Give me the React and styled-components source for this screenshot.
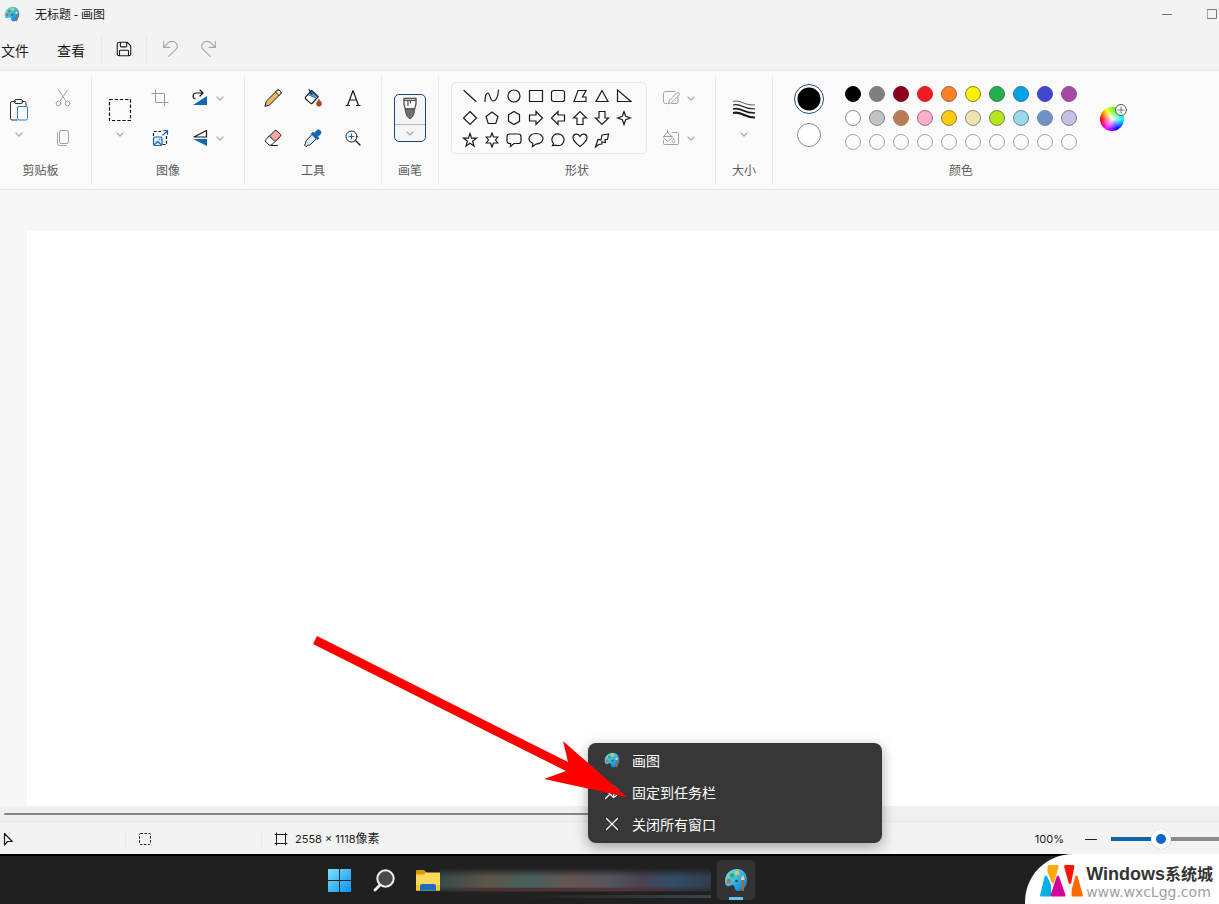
import * as React from "react";
import styled, { createGlobalStyle } from "styled-components";

const GlobalStyle = createGlobalStyle`
  * {
    box-sizing: border-box;
  }
  body {
    margin: 0;
    font-family: "Inter", "Noto Sans CJK SC", sans-serif;
    font-size: 12px;
    color: #1b1b1b;
    background: #f3f3f3;
  }
  button {
    display: flex;
    align-items: center;
    justify-content: center;
    padding: 0;
    border: 0;
    background: none;
    color: inherit;
    font: inherit;
  }
  svg {
    display: block;
    flex-shrink: 0;
  }
`;

/* ---------- icons ---------- */

const Icon = ({ size = 20, box = 20, children, ...rest }) => (
  <svg
    width={size}
    height={size}
    viewBox={`0 0 ${box} ${box}`}
    fill="none"
    stroke="currentColor"
    strokeLinecap="round"
    strokeLinejoin="round"
    aria-hidden="true"
    {...rest}
  >
    {children}
  </svg>
);

const PaintIcon = ({ size = 24 }) => {
  const id = React.useId();
  return (
    <Icon size={size} box={24} stroke="none">
      <defs>
        <linearGradient id={id} x1="0" y1="0" x2="1" y2="1">
          <stop offset="0" stopColor="#7fe3f2" />
          <stop offset="0.5" stopColor="#37b4e3" />
          <stop offset="1" stopColor="#0a73c4" />
        </linearGradient>
      </defs>
      <path
        fill={`url(#${id})`}
        d="M13 1C6 1 1 6.5 1 13c0 3.600 1.500 5.200 3.400 5.200 2.400 0 3.200-1.700 4.900-1 2 .8.7 5.800 4.700 5.800 5.500 0 9-5 9-11C23 5.500 18.800 1 13 1z"
      />
      <circle cx="4.800" cy="13" r="2.200" fill="#c9694a" />
      <circle cx="8" cy="7.500" r="2.300" fill="#35b04a" />
      <circle cx="13" cy="5" r="2.200" fill="#e8c445" />
      <circle cx="12.500" cy="13" r="1.300" fill="#1d4e7c" />
      <path fill="#e8cfa0" d="M18.800 7.500c1.500 1.300 2 3 1.600 4.500h-3.200c-.4-1.500.1-3.200 1.600-4.500z" />
      <path fill="#b0682c" d="M17.700 12h2.400l-.3 11h-1.900z" />
    </Icon>
  );
};

const Chevron = () => (
  <Icon size={10} box={10} stroke="#adadad">
    <path strokeWidth="1.200" d="M2 4l3 3 3-3" />
  </Icon>
);

const SaveIcon = () => (
  <Icon size={18}>
    <path strokeWidth="1.200" d="M4.500 2.500h9l4 4v9a2 2 0 0 1-2 2h-11a2 2 0 0 1-2-2v-11a2 2 0 0 1 2-2zM6 2.500v4.200c0 .6.300.9.900.9h5.200c.6 0 .9-.3.9-.9V2.500M5 17.500v-5.300c0-.6.300-.9.900-.9h8.200c.6 0 .9.300.9.900v5.300" />
  </Icon>
);

const UndoIcon = ({ flip }) => (
  <Icon size={18} stroke="#a6a6a6">
    <path
      transform={flip ? "matrix(-1 0 0 1 20 0)" : undefined}
      strokeWidth="1.200"
      d="M3 1.500v6.700h6.700M3.300 8l4-4.200c3-3 7.300-2.900 9.400-.4 2 2.400 1.600 5.300-.4 7.300l-7.800 7.600"
    />
  </Icon>
);

const PasteIcon = () => (
  <Icon size={24} box={24} stroke="#333">
    <path d="M8.500 3.500H5a1.500 1.500 0 0 0-1.500 1.500v15.500A1.500 1.500 0 0 0 5 22h5M15 3.500h2.500A1.500 1.500 0 0 1 19 5v3" />
    <rect x="7.500" y="1.500" width="8" height="4" rx="1.500" />
    <rect x="10.500" y="8.500" width="10" height="13.500" rx="1.500" stroke="#2f7cc4" fill="#f8fbff" />
  </Icon>
);

const CutIcon = () => (
  <Icon stroke="#a3a3a3">
    <circle cx="5.500" cy="15.500" r="2.300" />
    <circle cx="14.500" cy="15.500" r="2.300" />
    <path d="M5.500 2l7.800 11.600M14.500 2L6.700 13.600" />
  </Icon>
);

const CopyIcon = () => (
  <Icon stroke="#a3a3a3">
    <rect x="6.500" y="2.500" width="9" height="13" rx="1.500" />
    <path d="M4.500 4.500v11a2 2 0 0 0 2 2h7" />
  </Icon>
);

const SelectIcon = () => (
  <Icon size={24} box={24} strokeLinecap="butt">
    <rect x="1.500" y="1.500" width="21" height="21" strokeWidth="1.200" strokeDasharray="3.400 1.800" stroke="#111" />
  </Icon>
);

const CropIcon = () => (
  <Icon stroke="#9a9a9a">
    <path d="M5.500 2v12.500H18M2 5.500h12.500V18" />
  </Icon>
);

const ResizeIcon = () => (
  <Icon>
    <path strokeWidth="1.200" strokeLinecap="butt" strokeDasharray="3 1.700" d="M3.500 8V3.500H11M16.500 8v8.500H12" />
    <path stroke="#1668b5" strokeWidth="1.200" d="M13 7l4-4M13.500 2.500h4v4" />
    <rect x="3.500" y="9" width="8.500" height="8.500" rx="1.500" strokeWidth="1.200" stroke="#1668b5" fill="#dcecfa" />
    <path stroke="#1668b5" strokeWidth="1.200" d="M4.500 16.500l3.200-3 3.200 3M9.700 11.300v.4" />
  </Icon>
);

const RotateIcon = () => (
  <Icon>
    <path strokeWidth="1.200" d="M10 2l3 3-3 3M12.700 5H6a3 3 0 0 0-1 5.800" />
    <path d="M17 8v9H3z" fill="#1367b3" stroke="none" />
  </Icon>
);

const FlipIcon = () => (
  <Icon>
    <path strokeWidth="1.200" d="M16.500 2.500v6.500H4z" />
    <path d="M17 11v7L3 11z" fill="#1367b3" stroke="none" />
  </Icon>
);

const PencilIcon = () => (
  <Icon>
    <path fill="#e9b95f" d="M2 18l1.300-4.800L14 2.500a1.800 1.800 0 0 1 2.600 0l.9.900a1.800 1.800 0 0 1 0 2.600L6.800 16.700z" />
    <path fill="#f5e2b8" d="M12.500 4L16 7.500l1.500-1.500c.7-.7.7-1.800 0-2.500l-1-1c-.7-.7-1.800-.7-2.500 0z" />
  </Icon>
);

const FillIcon = () => (
  <Icon>
    <path fill="#fff" strokeWidth="1.200" d="M8.500 2.500l6.800 6.200-5.800 6.300a1.500 1.500 0 0 1-2.100.1l-4.600-4.100a1.500 1.500 0 0 1-.1-2.100z" />
    <path fill="#5ea3dd" stroke="#1668b5" d="M5.500 6.500l2.800-3 5.500 5-1 1z" />
    <path strokeWidth="1.200" d="M6 1.500l3 5" />
    <path fill="#b5441c" stroke="#7d2e12" strokeWidth=".5" d="M16 11.500c1.300 1.700 2.500 3 2.500 4.300a2.500 2.500 0 0 1-5 0c0-1.300 1.200-2.600 2.500-4.300z" />
  </Icon>
);

const TextIcon = () => (
  <Icon>
    <path strokeWidth="1.200" d="M4.500 17.500L10 2.500l5.500 15M6.500 12h7M3 17.500h3.500M13.500 17.500H17" />
  </Icon>
);

const EraserIcon = () => (
  <Icon>
    <path fill="#f6a6a0" d="M6.500 8l5.300-5.200a1.500 1.500 0 0 1 2.100 0l3.500 3.500a1.500 1.500 0 0 1 0 2.100L12 13.500z" />
    <path fill="#fff" d="M6.500 8l5.500 5.500-3.500 3.600H6l-3.200-3.200a1.500 1.500 0 0 1 0-2.100z" />
    <path d="M8 17.500h6.500" />
  </Icon>
);

const DropperIcon = () => (
  <Icon>
    <path fill="#dcecf8" d="M9.500 6.500l4 4-6 6c-1 1-2 .5-3 .9L3 18.500 1.500 17l1-1.500c.4-1-.1-2 .9-3z" />
    <path fill="#1367b3" stroke="#1367b3" d="M8.500 5.500l1.300-1.200 1.500 1 2.400-2.600a2.400 2.400 0 0 1 3.500 3.500l-2.500 2.500 1 1.500-1.200 1.300z" />
  </Icon>
);

const ZoomIcon = () => (
  <Icon>
    <circle cx="8.500" cy="8.500" r="5.500" />
    <path d="M12.700 12.700L17 17" strokeWidth="1.300" />
    <path d="M8.500 6v5M6 8.500h5" stroke="#1367b3" />
  </Icon>
);

const BrushIcon = () => (
  <Icon size={24} box={24} stroke="#4d4d4d">
    <path fill="#f8f8f8" strokeWidth="1.300" d="M6 2.500h12v5c0 2-1 3.500-1.300 5.500H7.300C7 11 6 9.500 6 7.500z" />
    <path strokeWidth="1.200" d="M10 4.500v5M12.500 4.500v2.500M6 4.500h12" />
    <path d="M7.500 13h9l-.5 4.500c-.4 2.300-2.500 5-4 5s-3.600-2.700-4-5z" fill="#707070" />
  </Icon>
);

const OutlineIcon = () => (
  <Icon stroke="#a3a3a3">
    <path d="M14 3.500H4.500a2 2 0 0 0-2 2v8a2 2 0 0 0 2 2H6M17 9.500v4a2 2 0 0 1-2 2h-4" />
    <path d="M7.500 15.500l1-3.300 7.200-7.200a1.500 1.500 0 0 1 2.300 2.200l-7.200 7.300z" />
  </Icon>
);

const ShapeFillIcon = () => (
  <Icon stroke="#a3a3a3">
    <path d="M11 4.500h5.500a1 1 0 0 1 1 1v10a1 1 0 0 1-1 1h-13a1 1 0 0 1-1-1V12" />
    <path d="M6.500 4.500l5 4.500-4 4a1 1 0 0 1-1.400 0L2.700 9.700a1 1 0 0 1 0-1.400zM3 8.500h8M6.500 2v3M12.500 11c1 1.200 1.300 1.700 1.300 2.300a1.300 1.300 0 0 1-2.600 0c0-.6.400-1.100 1.300-2.300z" />
  </Icon>
);

const SizeIcon = () => (
  <Icon size={24} box={24} stroke="#1b1b1b" strokeLinecap="butt">
    <path strokeWidth=".7" d="M1 3.500c3-1 6-.5 10 1.300S19 7 23 7" />
    <path strokeWidth="1.200" d="M1 7c3-1 6-.5 10 1.500S19 11 23 11" />
    <path strokeWidth="1.700" d="M1 11c3-1 6-.5 10 1.500S19 15 23 15" />
    <path strokeWidth="2.200" d="M1 15c3-1 6-.5 10 1.500S19 19.500 23 19.500" />
  </Icon>
);

const PlusBadge = () => (
  <Icon size={12} box={12} stroke="#555">
    <circle cx="6" cy="6" r="5.500" fill="#fbfbfb" />
    <path d="M6 3v6M3 6h6" stroke="#777" />
  </Icon>
);

const PointerIcon = () => (
  <Icon size={16} box={16}>
    <path strokeWidth="1.200" d="M3.500 2.500v11.500l3-3.500h4.800z" />
  </Icon>
);

const SelectionIcon = () => (
  <Icon size={14} box={14} strokeLinecap="butt">
    <rect x="1.500" y="1.500" width="11" height="11" rx="1" strokeDasharray="2.500 1.500" />
  </Icon>
);

const CanvasSizeIcon = () => (
  <Icon size={14} box={14}>
    <path d="M2.500 1v12M11.500 1v12M1 2.500h12M1 11.500h12" />
  </Icon>
);

const StartIcon = () => (
  <Icon size={24} box={24} stroke="none">
    <defs>
      <linearGradient id="start" x1="0" y1="0" x2="24" y2="24" gradientUnits="userSpaceOnUse">
        <stop offset="0" stopColor="#7be6fb" />
        <stop offset="1" stopColor="#0a8df0" />
      </linearGradient>
    </defs>
    <path fill="url(#start)" d="M0 1h11v11H0zM12 1h11v11H12zM0 13h11v11H0zM12 13h11v11H12z" />
  </Icon>
);

const SearchIcon = () => (
  <Icon size={24} box={24} stroke="#f0f0f0">
    <path strokeWidth="2.800" d="M8.500 16.500L3 22" />
    <circle cx="13.500" cy="10.500" r="8.200" strokeWidth="2" fill="#4a4a4a" />
  </Icon>
);

const FolderIcon = () => (
  <Icon size={24} box={24} stroke="none">
    <path fill="#d99a12" d="M0 3a1 1 0 0 1 1-1h7l2.500 2.500V7H0z" />
    <path fill="#ffd75e" d="M0 6.500h8l2-2h14v18H0z" />
    <path fill="#fbc52c" d="M0 17h24v5.500H0z" />
    <path fill="#1670c6" d="M4 22.500V18a2 2 0 0 1 2-2h12a2 2 0 0 1 2 2v4.500z" />
  </Icon>
);

const PinIcon = () => (
  <Icon size={16} box={16}>
    <path strokeWidth="1.200" d="M9.500 2l5 4.500-4 2.500-1.500 4-5.500-5.500 3.500-1.500zM6 10l-4.500 4.500M9.500 13.500l3-2" />
  </Icon>
);

const CloseIcon = () => (
  <Icon size={16} box={16}>
    <path strokeWidth="1.200" d="M2.500 2.500l11 11M13.500 2.500l-11 11" />
  </Icon>
);

const SiteLogo = () => (
  <svg width="44" height="32" viewBox="0 0 44 32" aria-hidden="true">
    <path fill="#00b2e3" d="M4.600 11.500c.3-1.300 1.900-1.500 2.500-.3L11 20v10c0 1-.6 1.500-1.500 1.500h-8C.4 31.500-.1 30.800.2 29.700z" />
    <path fill="#ffa800" d="M7.600 1.700C7.800.6 8.300 0 9.400 0h7.800c1.100 0 1.700.7 1.300 1.900L14 17.500c-.4 1.300-1.700 1.300-2.200 0L7.500 7z" />
    <path fill="#d6009a" d="M16.700 11.500c.4-1.300 2-1.300 2.400 0l6.300 18.200c.4 1.100-.1 1.800-1.200 1.800H12c-1.100 0-1.700-.7-1.300-1.800z" />
    <path fill="#ff1200" d="M24.200 1.900C23.900.7 24.500 0 25.600 0h7.200c1.100 0 1.700.7 1.500 1.900L31.200 18c-.4 1.400-2 1.400-2.500 0z" />
    <path fill="#ff6a00" d="M35.300 11.500c.4-1.300 2-1.300 2.400 0l5 18.200c.3 1.100-.2 1.800-1.300 1.800h-8.300c-.9 0-1.500-.5-1.600-1.500l.3-6z" />
  </svg>
);

/* ---------- data ---------- */

const shapes = [
  ["直线", "M2 2.500l12 11"],
  ["曲线", "M1 13.500C1 8 2 5 4 5s2 8 5 8 5-5 5.500-11"],
  ["椭圆", "M14 8A6 6 0 1 1 2 8a6 6 0 0 1 12 0z"],
  ["矩形", "M1.500 2.500h13v11h-13z"],
  ["圆角矩形", "M3.500 2.500h9a2 2 0 0 1 2 2v7a2 2 0 0 1-2 2h-9a2 2 0 0 1-2-2v-7a2 2 0 0 1 2-2z"],
  ["多边形", "M6 2.500h8l-3.500 6.500h3.500v4.500H2z"],
  ["三角形", "M8 2.500l6 11H2z"],
  ["直角三角形", "M1.500 2v11.500H15z"],
  ["菱形", "M8 1.500L14.500 8 8 14.500 1.500 8z"],
  ["五边形", "M8 2l6 4.500-2.200 7H4.200L2 6.500z"],
  ["六边形", "M8 1.500l5.500 3.200v6.600L8 14.500l-5.500-3.200V4.700z"],
  ["右箭头", "M1.500 5H8V1.500L14.500 8 8 14.500V11H1.500z"],
  ["左箭头", "M14.500 5H8V1.500L1.500 8 8 14.500V11h6.500z"],
  ["上箭头", "M5 14.500V8H1.500L8 1.500 14.500 8H11v6.500z"],
  ["下箭头", "M5 1.500V8H1.500L8 14.500 14.500 8H11V1.500z"],
  ["四角星形", "M8 1.500l1.700 4.800L14.500 8l-4.800 1.700L8 14.500 6.300 9.700 1.500 8l4.800-1.700z"],
  ["五角星形", "M8 1.500l1.600 4.700h4.900l-3.900 3 1.400 4.800L8 11.200 4 14l1.400-4.800-3.900-3h4.900z"],
  ["六角星形", "M8 1l1.500 4h4.300L11.500 8l2.300 3H9.500L8 15l-1.500-4H2.200l2.300-3-2.300-3h4.300z"],
  ["圆角矩形标注", "M3.500 2h9A2.500 2.500 0 0 1 15 4.500v4.500a2.500 2.500 0 0 1-2.500 2.500H8L4.500 14.500v-3h-1A2.500 2.500 0 0 1 1 9V4.500A2.500 2.500 0 0 1 3.500 2z"],
  ["椭圆形标注", "M8 1.500c3.900 0 7 2.300 7 5.300s-3.100 5.300-7 5.300L4.500 14.500l.2-3.300C2.400 10.200 1 8.700 1 6.800c0-3 3.100-5.300 7-5.300z"],
  ["云形标注", "M3.500 11.500C1.500 9.500 1.300 6 3.200 4 5 1.500 8.500 1.200 11 2.700c2.800 1.500 3.800 4.800 2.500 7.500-1.300 2.800-4.500 4-7.500 3L2.500 13.500z"],
  ["心形", "M8 14.500C4 11.500 1 8.800 1 5.500 1 2 6 .5 8 4.500 10 .5 15 2 15 5.500c0 3.300-3 6-7 9z"],
  ["闪电形", "M8 3l6.500-1-1 5.500-2.500 0 .5 3-3.500-.5 0 2-3.500.5-3 2.500 1.500-4.500 1-3 3 .5z"],
];

const palette = [
  { color: "#000000", edge: "#000000" },
  { color: "#7f7f7f", edge: "#7f7f7f" },
  { color: "#88001b", edge: "#88001b" },
  { color: "#ec1c24", edge: "#ec1c24" },
  { color: "#ff7f27", edge: "#9b6a48" },
  { color: "#fff200", edge: "#85803a" },
  { color: "#22b14c", edge: "#3b7d4e" },
  { color: "#00a2e8", edge: "#33769a" },
  { color: "#3f48cc", edge: "#3f48cc" },
  { color: "#a349a4", edge: "#a349a4" },
  { color: "#ffffff", edge: "#8a8a8a" },
  { color: "#c3c3c3", edge: "#858585" },
  { color: "#b97a57", edge: "#b97a57" },
  { color: "#ffaec9", edge: "#98727f" },
  { color: "#ffc90e", edge: "#93813d" },
  { color: "#efe4b0", edge: "#8f8b76" },
  { color: "#b5e61d", edge: "#75883e" },
  { color: "#99d9ea", edge: "#6b868d" },
  { color: "#7092be", edge: "#7092be" },
  { color: "#c8bfe7", edge: "#827d93" },
  ...Array.from({ length: 10 }, () => ({ color: "#fbfbfb", edge: "#a8a8a8" })),
];

/* ---------- app ---------- */

const App = () => {
  const [zoom, setZoom] = React.useState(45);

  return (
    <Page>
      <GlobalStyle />
      <TitleBar>
        <PaintIcon size={16} />
        <Title>无标题 - 画图</Title>
        <WindowButtons>
          <WindowButton aria-label="最小化">
            <Icon size={10} box={10} stroke="#777" strokeLinecap="butt">
              <path d="M0 5.500h10" />
            </Icon>
          </WindowButton>
          <WindowButton aria-label="最大化">
            <Icon size={10} box={10} stroke="#777">
              <rect x=".5" y=".5" width="9" height="9" />
            </Icon>
          </WindowButton>
        </WindowButtons>
      </TitleBar>

      <MenuBar>
        <MenuText>文件</MenuText>
        <MenuText>查看</MenuText>
        <QuickButtons>
          <QuickButton $wide aria-label="保存">
            <SaveIcon />
          </QuickButton>
        </QuickButtons>
        <QuickButton aria-label="撤消">
          <UndoIcon />
        </QuickButton>
        <QuickButton aria-label="重做">
          <UndoIcon flip />
        </QuickButton>
      </MenuBar>

      <Ribbon>
        <Group $width={92}>
          <Tools>
            <BigButton $width={38} aria-label="粘贴">
              <PasteIcon />
              <Chevron />
            </BigButton>
            <ToolGrid $columns={1} $cell={50}>
              <ToolButton aria-label="剪切"><CutIcon /></ToolButton>
              <ToolButton aria-label="复制"><CopyIcon /></ToolButton>
            </ToolGrid>
          </Tools>
          <GroupLabel $inset={10}>剪贴板</GroupLabel>
        </Group>

        <Group $width={153}>
          <Tools $indent={8}>
            <BigButton $width={40} aria-label="选择">
              <SelectIcon />
              <Chevron />
            </BigButton>
            <ToolGrid $columns={1} $cell={40}>
              <ToolButton aria-label="裁剪"><CropIcon /></ToolButton>
              <ToolButton aria-label="重设大小"><ResizeIcon /></ToolButton>
            </ToolGrid>
            <ToolGrid $columns={1} $cell={56}>
              <SplitButton aria-label="旋转"><RotateIcon /><Chevron /></SplitButton>
              <SplitButton aria-label="翻转"><FlipIcon /><Chevron /></SplitButton>
            </ToolGrid>
          </Tools>
          <GroupLabel>图像</GroupLabel>
        </Group>

        <Group $width={137}>
          <Tools $indent={8}>
            <ToolGrid $columns={3} $cell={40}>
              <ToolButton aria-label="铅笔"><PencilIcon /></ToolButton>
              <ToolButton aria-label="填充"><FillIcon /></ToolButton>
              <ToolButton aria-label="文本"><TextIcon /></ToolButton>
              <ToolButton aria-label="橡皮擦"><EraserIcon /></ToolButton>
              <ToolButton aria-label="颜色选取器"><DropperIcon /></ToolButton>
              <ToolButton aria-label="放大镜"><ZoomIcon /></ToolButton>
            </ToolGrid>
          </Tools>
          <GroupLabel>工具</GroupLabel>
        </Group>

        <Group $width={57}>
          <Tools $center>
            <BrushButton aria-label="画笔">
              <BrushIcon />
              <BrushMenu>
                <Chevron />
              </BrushMenu>
            </BrushButton>
          </Tools>
          <GroupLabel>画笔</GroupLabel>
        </Group>

        <Group $width={277}>
          <Tools $indent={12}>
            <ShapeGallery>
              {shapes.map(([name, d]) => (
                <button key={name} aria-label={name}>
                  <Icon size={16} box={16}>
                    <path d={d} strokeWidth="1.200" strokeLinejoin="miter" />
                  </Icon>
                </button>
              ))}
            </ShapeGallery>
            <ToolGrid $columns={1} $cell={60}>
              <SplitButton aria-label="形状轮廓"><OutlineIcon /><Chevron /></SplitButton>
              <SplitButton aria-label="形状填充"><ShapeFillIcon /><Chevron /></SplitButton>
            </ToolGrid>
          </Tools>
          <GroupLabel>形状</GroupLabel>
        </Group>

        <Group $width={57}>
          <Tools $center>
            <BigButton $width={40} aria-label="大小">
              <SizeIcon />
              <Chevron />
            </BigButton>
          </Tools>
          <GroupLabel>大小</GroupLabel>
        </Group>

        <Group $width={376} $last>
          <Tools $indent={20}>
            <CurrentColors>
              <ActiveColor aria-label="颜色 1" />
              <SecondColor aria-label="颜色 2" />
            </CurrentColors>
            <Swatches>
              {palette.map(({ color, edge }, i) => (
                <Swatch key={i} $color={color} $edge={edge} aria-label={`颜色 ${color}`} />
              ))}
            </Swatches>
            <WheelButton aria-label="编辑颜色">
              <Wheel />
              <WheelBadge>
                <PlusBadge />
              </WheelBadge>
            </WheelButton>
          </Tools>
          <GroupLabel>颜色</GroupLabel>
        </Group>
      </Ribbon>

      <Workspace>
        <Canvas />
      </Workspace>
      <ScrollTrack>
        <ScrollThumb />
      </ScrollTrack>

      <StatusBar>
        <StatusCell $width={126}>
          <PointerIcon />
        </StatusCell>
        <StatusCell $width={136} $indent={12}>
          <SelectionIcon />
        </StatusCell>
        <StatusCell $indent={12} $last>
          <CanvasSizeIcon />
          <CanvasSize>
            2558 × 1118<Unit>像素</Unit>
          </CanvasSize>
        </StatusCell>
        <ZoomControls>
          <ZoomLabel htmlFor="zoom">100%</ZoomLabel>
          <button aria-label="缩小">
            <Icon size={12} box={12}>
              <path d="M.5 6.500h11" />
            </Icon>
          </button>
          <Slider
            id="zoom"
            type="range"
            value={zoom}
            onChange={(e) => setZoom(Number(e.target.value))}
            style={{ "--fill": `${zoom}%` }}
          />
        </ZoomControls>
      </StatusBar>

      <Taskbar>
        <TaskButton aria-label="开始"><StartIcon /></TaskButton>
        <TaskButton aria-label="搜索"><SearchIcon /></TaskButton>
        <Pinned>
          <FolderIcon />
          <BlurredApps />
        </Pinned>
        <PaintTask>
          <PaintTile aria-label="画图">
            <PaintIcon size={24} />
          </PaintTile>
          <ContextMenu>
            <MenuItem><PaintIcon size={16} />画图</MenuItem>
            <MenuItem><PinIcon />固定到任务栏</MenuItem>
            <MenuItem><CloseIcon />关闭所有窗口</MenuItem>
          </ContextMenu>
          <Arrow width="316" height="164" viewBox="0 0 316 164" aria-hidden="true">
            <path
              fill="#ff0000"
              d="M5 1L256 127 251 106 315 162 232 144 254 136 1 9z"
            />
          </Arrow>
        </PaintTask>
        <Watermark>
          <SiteLogo />
          <div>
            <SiteName>
              Windows<SiteNameCn>系统城</SiteNameCn>
            </SiteName>
            <SiteUrl>www.wxcLgg.com</SiteUrl>
          </div>
        </Watermark>
      </Taskbar>
    </Page>
  );
};

export default App;

const Page = styled.main`
  display: flex;
  flex-direction: column;
  min-height: 100vh;
  overflow: hidden;
`;

const TitleBar = styled.header`
  display: flex;
  align-items: center;
  height: 28px;
  padding-left: 4px;
`;

const Title = styled.h1`
  margin: 0 auto 0 15px;
  font-family: "Noto Sans", "Noto Sans CJK SC", sans-serif;
  font-size: 12px;
  font-weight: 400;
`;

const WindowButtons = styled.div`
  display: flex;
  gap: 31px;
`;

const WindowButton = styled.button`
  width: 14px;
  height: 26px;
`;

const MenuBar = styled.nav`
  display: flex;
  align-items: center;
  height: 43px;
  padding-left: 1px;
  border-bottom: 2px solid #ececec;
`;

const MenuText = styled.button`
  margin-right: 28px;
  padding-top: 2px;
  font-size: 14px;

  & + & {
    margin-right: 16px;
  }
`;

const QuickButtons = styled.div`
  margin-right: 3px;
  border: solid #e9e9e9;
  border-width: 0 1px;
`;

const QuickButton = styled.button`
  width: ${({ $wide }) => ($wide ? 44 : 39)}px;
  height: 26px;
`;

const Ribbon = styled.section`
  display: flex;
  height: 119px;
  padding: 4px 0;
  background: #fafafa;
  border-bottom: 1px solid #e6e6e6;
`;

const Group = styled.div`
  flex: none;
  width: ${({ $width }) => $width}px;
  padding-top: 3px;
  border-right: ${({ $last }) => ($last ? "0" : "1px solid #ececec")};
`;

const Tools = styled.div`
  display: flex;
  justify-content: ${({ $center }) => ($center ? "center" : "flex-start")};
  height: 80px;
  padding-left: ${({ $indent = 0 }) => $indent}px;
`;

const GroupLabel = styled.div`
  padding-right: ${({ $inset = 0 }) => $inset}px;
  line-height: 26px;
  text-align: center;
  color: #5c5c5c;
`;

const BigButton = styled.button`
  flex-direction: column;
  justify-content: flex-start;
  gap: 7px;
  width: ${({ $width }) => $width}px;
  padding-top: 20px;
`;

const ToolGrid = styled.div`
  display: grid;
  grid-template-columns: repeat(${({ $columns }) => $columns}, ${({ $cell }) => $cell}px);
  grid-auto-rows: 40px;
`;

const ToolButton = styled.button`
  width: 100%;
`;

const SplitButton = styled.button`
  justify-content: flex-start;
  gap: 5px;
  padding-left: 10px;
`;

const BrushButton = styled.button`
  flex-direction: column;
  width: 32px;
  height: 48px;
  margin-top: 16px;
  border: 1px solid #1c4a80;
  border-radius: 5px;
  background: #f5f5f5;
  overflow: hidden;
`;

const BrushMenu = styled.span`
  display: flex;
  justify-content: center;
  width: 100%;
  margin-top: 4px;
  padding: 3px 0 2px;
  border-top: 1px solid #b4b4b4;
`;

const ShapeGallery = styled.div`
  display: grid;
  grid-template-columns: repeat(8, 22px);
  grid-auto-rows: 22px;
  width: 196px;
  height: 72px;
  margin: 4px 4px 0 0;
  padding: 2px 7px;
  border: 1px solid #e8e8e8;
  border-radius: 5px;
`;

const CurrentColors = styled.div`
  display: flex;
  flex-direction: column;
  align-items: center;
  gap: 9px;
  width: 32px;
  margin-right: 16px;
  padding-top: 6px;
`;

const ActiveColor = styled.button`
  width: 30px;
  height: 30px;
  border: 1px solid #1c4a80;
  border-radius: 50%;
  background: radial-gradient(circle, #000 11px, #fff 12px);
`;

const SecondColor = styled.button`
  width: 24px;
  height: 24px;
  border: 1px solid #8a8a8a;
  border-radius: 50%;
  background: #fff;
`;

const Swatches = styled.div`
  display: grid;
  grid-template-columns: repeat(10, 24px);
  grid-auto-rows: 24px;
  place-items: center;
  padding-top: 4px;
`;

const Swatch = styled.button`
  width: 16px;
  height: 16px;
  border: 1px solid ${({ $edge }) => $edge};
  border-radius: 50%;
  background: ${({ $color }) => $color};
`;

const WheelButton = styled.button`
  position: relative;
  align-self: center;
  width: 26px;
  height: 26px;
  margin: 2px 0 0 18px;
`;

const Wheel = styled.span`
  width: 24px;
  height: 24px;
  border-radius: 50%;
  background:
    radial-gradient(circle, #fff, transparent 65%),
    conic-gradient(from 270deg, #f00, #ff0, #0f0, #0ff, #00f, #f0f, #f00);
`;

const WheelBadge = styled.span`
  position: absolute;
  top: -2px;
  right: -2px;
`;

const Workspace = styled.section`
  display: flex;
  flex: 1;
  padding: 41px 0 0 27px;
  background: #f7f7f7;
`;

const Canvas = styled.div`
  flex: 1;
  background: #fff;
`;

const ScrollTrack = styled.div`
  display: flex;
  align-items: center;
  height: 16px;
  padding-left: 4px;
  background: #f0f0f0;
  border-bottom: 1px solid #e8e8e8;
`;

const ScrollThumb = styled.div`
  width: 60%;
  height: 2px;
  border-radius: 1px;
  background: #868686;
`;

const StatusBar = styled.footer`
  display: flex;
  align-items: center;
  height: 32px;
  padding-top: 2px;
  font-size: 11px;
  line-height: 16px;
`;

const StatusCell = styled.div`
  display: flex;
  align-items: center;
  gap: 7px;
  width: ${({ $width }) => ($width ? `${$width}px` : "auto")};
  padding-left: ${({ $indent = 1 }) => $indent}px;
  border-right: ${({ $last }) => ($last ? "0" : "1px solid #e8e8e8")};
`;

const CanvasSize = styled.span`
  white-space: nowrap;
`;

const Unit = styled.span`
  font-size: 12px;
`;

const ZoomControls = styled.div`
  display: flex;
  align-items: center;
  margin-left: auto;
`;

const ZoomLabel = styled.label`
  margin-right: 21px;
`;

const Slider = styled.input`
  appearance: none;
  width: 108px;
  height: 20px;
  margin: 0 0 0 14px;
  background: linear-gradient(
      to right,
      #0f66ab var(--fill),
      #8a8a8a var(--fill)
    )
    center / 100% 4px no-repeat;

  &::-webkit-slider-thumb {
    appearance: none;
    width: 20px;
    height: 20px;
    border: 5px solid #fff;
    border-radius: 50%;
    background: #0f66c4;
    box-shadow: 0 0 1px #aaa;
  }
`;

const Taskbar = styled.footer`
  display: flex;
  align-items: center;
  height: 50px;
  padding-left: 328px;
  background: #202020;
  border-top: 2px solid #000;
`;

const TaskButton = styled.button`
  width: 24px;
  margin-right: 20px;
`;

const Pinned = styled.div`
  display: flex;
  align-items: center;
  margin-right: 6px;
`;

const BlurredApps = styled.div`
  width: 271px;
  height: 38px;
  background:
    linear-gradient(to right, transparent 30%, #3d454b) 0 34px / 100% 3px no-repeat,
    linear-gradient(to right, transparent, #4d3030 20%, #523337 70%, transparent) 0 27px / 100% 3px no-repeat,
    linear-gradient(to bottom, #202020, transparent 35%, transparent 75%, #202020) 0 7px / 100% 25px no-repeat,
    linear-gradient(to right, #354b49, #5f5547 18%, #45605f 32%, #65544f 48%, #54565f 62%, #4a4151 74%, #314c68 86%, #343c47)
      0 7px / 100% 24px no-repeat;
`;

const PaintTask = styled.div`
  position: relative;
`;

const PaintTile = styled.button`
  width: 38px;
  height: 40px;
  border-radius: 4px;
  background: linear-gradient(#5ec8f5, #5ec8f5) center bottom / 14px 3px no-repeat #333;
`;

const ContextMenu = styled.div`
  position: absolute;
  bottom: 57px;
  left: 50%;
  width: 294px;
  margin-left: -148px;
  padding: 1px 0 3px;
  border-radius: 8px;
  background: #373737;
  color: #fff;
  box-shadow: 0 4px 14px rgba(0, 0, 0, 0.35);
`;

const MenuItem = styled.button`
  justify-content: flex-start;
  gap: 12px;
  width: 100%;
  height: 32px;
  padding-left: 16px;
  font-size: 14px;
`;

const Arrow = styled.svg`
  position: absolute;
  right: 127px;
  bottom: 101px;
  pointer-events: none;
`;

const Watermark = styled.aside`
  display: flex;
  align-items: center;
  align-self: flex-end;
  gap: 2px;
  height: 50px;
  margin-left: auto;
  padding: 4px 6px 0 15px;
  border-top-left-radius: 48px;
  background: #fff;
`;

const SiteName = styled.div`
  font-family: "Liberation Sans", "Noto Sans CJK SC", sans-serif;
  font-size: 18px;
  font-weight: 700;
  line-height: 20px;
  color: #333;
  white-space: nowrap;
`;

const SiteNameCn = styled.span`
  font-size: 16px;
`;

const SiteUrl = styled.div`
  font-family: "DejaVu Sans", sans-serif;
  font-size: 14px;
  line-height: 14px;
  color: #a0a0a0;
`;
